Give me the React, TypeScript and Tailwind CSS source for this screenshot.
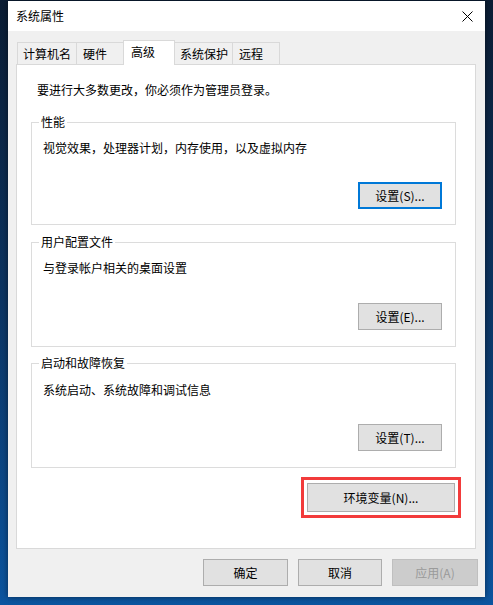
import React from "react";

function Btn({
  children,
  className = "",
  focused = false,
  disabled = false,
}: {
  children: React.ReactNode;
  className?: string;
  focused?: boolean;
  disabled?: boolean;
}) {
  const base = "flex items-center justify-center text-[12px] leading-[16px]";
  const look = disabled
    ? "bg-[#cccccc] border border-[#bfbfbf] text-[#9a9a9a]"
    : focused
    ? "bg-[#e1e1e1] border-2 border-[#0078d7] text-black"
    : "bg-[#e1e1e1] border border-[#adadad] text-black";
  return <div className={`${base} ${look} ${className}`}>{children}</div>;
}

function Group({
  title,
  desc,
  btn,
  focused = false,
  className = "",
  descMt,
  btnMt,
  pb,
}: {
  title: string;
  desc: string;
  btn: string;
  focused?: boolean;
  className?: string;
  descMt: string;
  btnMt: string;
  pb: string;
}) {
  return (
    <fieldset className={`ml-[14px] w-[425px] border border-[#dcdcdc] ${className}`}>
      <legend className="ml-[7px] px-[2px] text-[12px] leading-[16px] text-black">{title}</legend>
      <div className={`flex flex-col pl-[11px] pr-[13px] ${pb}`}>
        <div className={`text-[12px] leading-[16px] text-black ${descMt}`}>{desc}</div>
        <div className={`flex justify-end ${btnMt}`}>
          <Btn focused={focused} className="w-[84px] h-[27px]">
            {btn}
          </Btn>
        </div>
      </div>
    </fieldset>
  );
}

export default function App() {
  return (
    <div className="w-[493px] h-[605px] overflow-hidden bg-gradient-to-b from-[#0b1d34] via-[#0c3563] to-[#0b55a0] pt-[1px] pl-[8px] font-['Noto_Sans_CJK_SC','Microsoft_YaHei',sans-serif]">
      <div className="w-[477px] h-[596px] flex flex-col bg-[#f0f0f0] shadow-[0_0_6px_rgba(0,0,0,0.5)]">
        {/* Title bar */}
        <div className="h-[30px] bg-white flex items-center justify-between pl-[8px] pr-[10px]">
          <span className="text-[12px] leading-[16px] text-black">系统属性</span>
          <svg width="11" height="11" viewBox="0 0 11 11" className="mr-[2px]">
            <path d="M0.5 0.5 L10.5 10.5 M10.5 0.5 L0.5 10.5" stroke="#000" strokeWidth="1" fill="none" />
          </svg>
        </div>

        {/* Body */}
        <div className="flex flex-col pt-[9px] pl-[8px] pr-[9px]">
          {/* Tabs */}
          <div className="flex items-end h-[24px] pl-[1px]">
            <div className="w-[60px] h-[22px] border border-b-0 border-[#d9d9d9] bg-[#f0f0f0] pl-[5px] flex items-center text-[12px] leading-[16px] text-black">
              计算机名
            </div>
            <div className="ml-[-1px] w-[48px] h-[22px] border border-b-0 border-[#d9d9d9] bg-[#f0f0f0] pl-[6px] flex items-center text-[12px] leading-[16px] text-black">
              硬件
            </div>
            <div className="relative z-10 ml-[-1px] mb-[-1px] w-[52px] h-[25px] border border-b-0 border-[#d9d9d9] bg-white pl-[7px] pb-[3px] flex items-center text-[12px] leading-[16px] text-black">
              高级
            </div>
            <div className="ml-[-1px] w-[59px] h-[22px] border border-b-0 border-[#d9d9d9] bg-[#f0f0f0] pl-[5px] flex items-center text-[12px] leading-[16px] text-black">
              系统保护
            </div>
            <div className="ml-[-1px] w-[48px] h-[22px] border border-b-0 border-[#d9d9d9] bg-[#f0f0f0] pl-[6px] flex items-center text-[12px] leading-[16px] text-black">
              远程
            </div>
          </div>

          {/* Panel */}
          <div className="w-[460px] h-[485px] bg-white border border-[#d9d9d9] flex flex-col">
            <div className="mt-[17px] pl-[20px] text-[12px] leading-[16px] text-black">
              要进行大多数更改，你必须作为管理员登录。
            </div>

            <Group
              className="mt-[16px]"
              title="性能"
              desc="视觉效果，处理器计划，内存使用，以及虚拟内存"
              btn="设置(S)..."
              focused
              descMt="mt-[10px]"
              btnMt="mt-[26px]"
              pb="pb-[15px]"
            />
            <Group
              className="mt-[9px]"
              title="用户配置文件"
              desc="与登录帐户相关的桌面设置"
              btn="设置(E)..."
              descMt="mt-[10px]"
              btnMt="mt-[27px]"
              pb="pb-[16px]"
            />
            <Group
              className="mt-[8px]"
              title="启动和故障恢复"
              desc="系统启动、系统故障和调试信息"
              btn="设置(T)..."
              descMt="mt-[11px]"
              btnMt="mt-[26px]"
              pb="pb-[16px]"
            />

            <div className="mt-[9px] flex justify-end pr-[14px]">
              <div className="border-[3px] border-[#f23b3b] p-[3px]">
                <Btn className="w-[148px] h-[29px]">环境变量(N)...</Btn>
              </div>
            </div>
          </div>

          {/* Bottom buttons */}
          <div className="mt-[10px] flex justify-end gap-[10px] mr-[-2px]">
            <Btn className="w-[85px] h-[27px]">确定</Btn>
            <Btn className="w-[84px] h-[27px]">取消</Btn>
            <Btn disabled className="w-[86px] h-[27px]">应用(A)</Btn>
          </div>
        </div>
      </div>
    </div>
  );
}
